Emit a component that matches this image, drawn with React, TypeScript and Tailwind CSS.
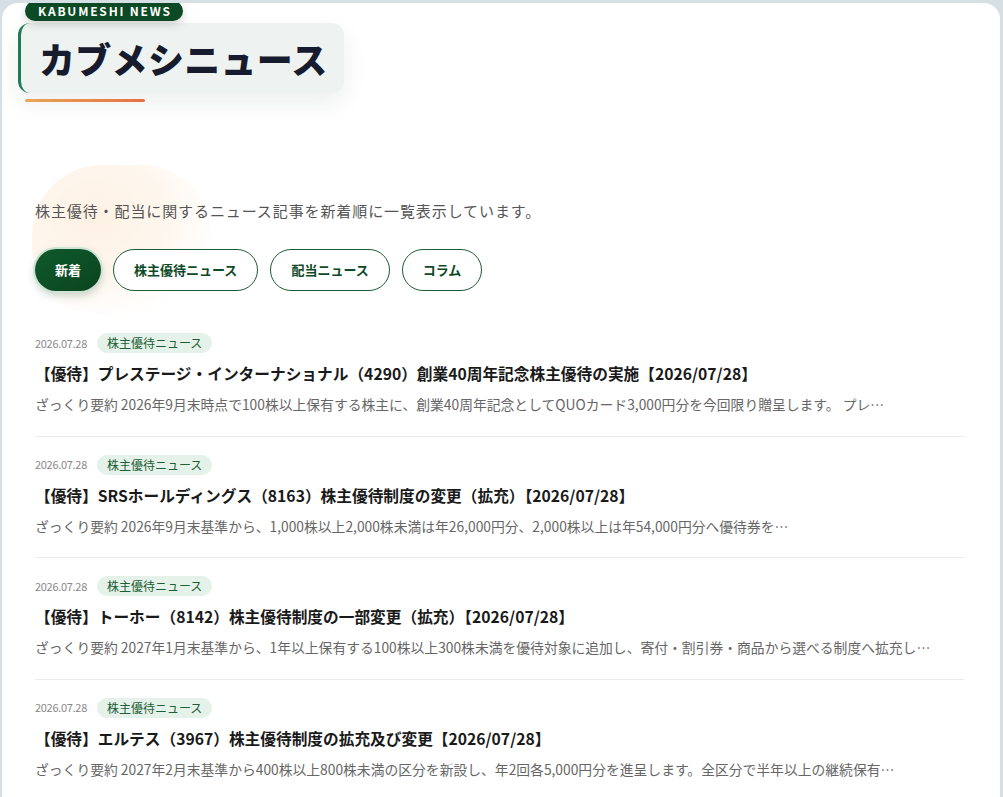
const font = { fontFamily: '"Noto Sans CJK JP", "Noto Sans", sans-serif' };

type NewsItem = {
  date: string;
  tag: string;
  title: string;
  summary: string;
};

const tabs = ["新着", "株主優待ニュース", "配当ニュース", "コラム"];

const news: NewsItem[] = [
  {
    date: "2026.07.28",
    tag: "株主優待ニュース",
    title: "【優待】プレステージ・インターナショナル（4290）創業40周年記念株主優待の実施【2026/07/28】",
    summary:
      "ざっくり要約 2026年9月末時点で100株以上保有する株主に、創業40周年記念としてQUOカード3,000円分を今回限り贈呈します。 プレ…",
  },
  {
    date: "2026.07.28",
    tag: "株主優待ニュース",
    title: "【優待】SRSホールディングス（8163）株主優待制度の変更（拡充）【2026/07/28】",
    summary:
      "ざっくり要約 2026年9月末基準から、1,000株以上2,000株未満は年26,000円分、2,000株以上は年54,000円分へ優待券を…",
  },
  {
    date: "2026.07.28",
    tag: "株主優待ニュース",
    title: "【優待】トーホー（8142）株主優待制度の一部変更（拡充）【2026/07/28】",
    summary:
      "ざっくり要約 2027年1月末基準から、1年以上保有する100株以上300株未満を優待対象に追加し、寄付・割引券・商品から選べる制度へ拡充し…",
  },
  {
    date: "2026.07.28",
    tag: "株主優待ニュース",
    title: "【優待】エルテス（3967）株主優待制度の拡充及び変更【2026/07/28】",
    summary:
      "ざっくり要約 2027年2月末基準から400株以上800株未満の区分を新設し、年2回各5,000円分を進呈します。全区分で半年以上の継続保有…",
  },
];

function PageHeader() {
  return (
    <div className="ml-[16px] flex flex-col items-start">
      <div className="relative">
        <span className="absolute left-[7px] top-[-22px] z-10 flex h-[20px] items-center rounded-full bg-[#0b4a24] pl-[13px] pr-[11px] text-[12px] font-bold tracking-[0.15em] text-white shadow-[0_3px_8px_rgba(0,0,0,0.18)]">
          KABUMESHI NEWS
        </span>
        <div className="flex h-[70px] items-center rounded-[12px] border-l-[3px] border-[#1f7a56] bg-[#eef3f2] pl-[18px] pr-[16px] shadow-[0_10px_24px_rgba(20,40,40,0.08)]">
          <h1 className="text-[36px] font-black leading-none tracking-[0.3px] text-[#161c2d]">カブメシニュース</h1>
        </div>
      </div>
      <div className="ml-[7px] mt-[6px] h-[3px] w-[120px] rounded-full bg-gradient-to-r from-[#f3ac58] to-[#ee7646]" />
    </div>
  );
}

function FilterTabs() {
  return (
    <div className="flex gap-3">
      {tabs.map((t, i) =>
        i === 0 ? (
          <button
            key={t}
            className="flex h-[42px] items-center rounded-full bg-gradient-to-br from-[#0f5a2c] to-[#0a4420] px-5 text-[13px] font-bold text-white shadow-[0_0_0_2px_#cfe3d5,0_4px_10px_rgba(10,70,35,0.25)]"
          >
            {t}
          </button>
        ) : (
          <button
            key={t}
            className="flex h-[42px] items-center rounded-full border border-[#1d5c36] bg-white px-5 text-[13px] font-bold text-[#0f4a26]"
          >
            {t}
          </button>
        )
      )}
    </div>
  );
}

function NewsRow({ item }: { item: NewsItem }) {
  return (
    <article className="border-b border-[#ebebeb] pb-[20.5px] pt-[18px]">
      <div className="flex items-center gap-[10px]">
        <span className="text-[11px] tracking-[-0.3px] text-[#888]">{item.date}</span>
        <span className="flex h-[20px] items-center rounded-full bg-[#e5f2e9] px-[10px] text-[12px] text-[#1c5e36]">
          {item.tag}
        </span>
      </div>
      <h2 className="mt-[9px] text-[15.7px] font-bold leading-[24px] text-[#1a1a1a]">{item.title}</h2>
      <p className="mt-[7px] text-[13.8px] leading-[22px] text-[#666]">{item.summary}</p>
    </article>
  );
}

export default function App() {
  return (
    <div style={font} className="min-h-[797px] bg-[#d6e0e4] pl-[2px] pr-[3px] pt-[3px]">
      <main className="relative min-h-[794px] overflow-hidden rounded-t-[16px] bg-white pt-[20px]">
        {/* soft peach glow behind the intro text */}
        <div className="pointer-events-none absolute left-[30px] top-[162px] h-[150px] w-[180px] rounded-[70px] bg-[radial-gradient(ellipse_at_35%_35%,#fdf1e3_0%,#fef7ef_45%,rgba(255,255,255,0)_75%)]" />

        <PageHeader />

        <div className="relative px-[33px]">
          <p className="mt-[97px] text-[15px] leading-[24px] tracking-[0.9px] text-[#555]">
            株主優待・配当に関するニュース記事を新着順に一覧表示しています。
          </p>
          <div className="mt-[26px]">
            <FilterTabs />
          </div>
          <div className="mr-[3px] mt-[24px]">
            {news.map((n) => (
              <NewsRow key={n.title} item={n} />
            ))}
          </div>
        </div>
      </main>
    </div>
  );
}
